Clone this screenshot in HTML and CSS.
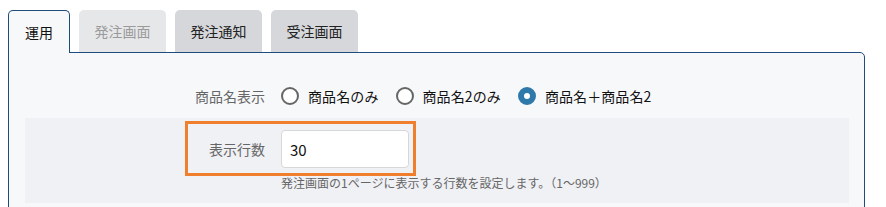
FILE: index.html
```html
<!DOCTYPE html>
<html lang="ja">
<head>
  <meta charset="UTF-8" />
  <title>設定</title>
  <link rel="stylesheet" href="styles.css">
</head>
<body>
  <div class="tabs">
    <div class="tab active">運用</div>
    <div class="tab disabled">発注画面</div>
    <div class="tab">発注通知</div>
    <div class="tab">受注画面</div>
  </div>

  <div class="panel">
    <div class="form-row">
      <div class="form-label">商品名表示</div>
      <div class="form-field radios">
        <label class="radio"><input type="radio" name="disp"> 商品名のみ</label>
        <label class="radio"><input type="radio" name="disp"> 商品名2のみ</label>
        <label class="radio"><input type="radio" name="disp" checked> 商品名＋商品名2</label>
      </div>
    </div>

    <div class="form-block shaded">
      <div class="form-row highlight">
        <div class="form-label">表示行数</div>
        <div class="form-field">
          <input class="text-input" type="text" value="30">
        </div>
      </div>
      <div class="help">発注画面の1ページに表示する行数を設定します。（1～999）</div>
    </div>
  </div>
</body>
</html>
```

FILE: styles.css
```css
body {
  margin: 0;
  padding: 10px 21px 0 8px;
  background-color: #fff;
  font-family: "Noto Sans CJK JP", "Noto Sans", sans-serif;
  font-size: 14px;
  color: #222;
}

.tabs {
  display: flex;
  gap: 9px;
  position: relative;
  z-index: 1;
}

.tab {
  width: 87px;
  height: 42px;
  display: flex;
  align-items: center;
  justify-content: center;
  background-color: #d6d7da;
  border-radius: 5px 5px 0 0;
  color: #222;
  box-sizing: border-box;
}

.tab.disabled {
  background-color: #e6e7e9;
  color: #9a9a9a;
}

.tab.active {
  width: 62px;
  height: 43px;
  margin-bottom: -1px;
  background-color: #f7f8fa;
  border: 1.5px solid #1f4c7c;
  border-bottom: none;
  color: #111;
}

.panel {
  background-color: #f7f8fa;
  border: 1.5px solid #1f4c7c;
  border-radius: 0 5px 0 0;
  padding: 24px 15px 0 16px;
  height: 160px;
  box-sizing: border-box;
}

.form-row {
  display: flex;
  align-items: center;
  gap: 16px;
}

.form-label {
  width: 240px;
  text-align: right;
  color: #666;
}

.radios {
  display: flex;
  align-items: center;
  gap: 17px;
  height: 38px;
}

.radio {
  display: flex;
  align-items: center;
  gap: 9px;
  color: #111;
  letter-spacing: 0.1px;
}

.radio input {
  appearance: none;
  -webkit-appearance: none;
  margin: 0;
  width: 18px;
  height: 18px;
  border: 2px solid #666;
  border-radius: 50%;
  background: #fff;
  box-sizing: border-box;
}

.radio input:checked {
  border: 6px solid #2f79aa;
}

.shaded {
  background-color: #f0f1f5;
  margin-top: 3px;
  padding: 12px 0 12px;
}

.highlight {
  position: relative;
}

.highlight::after {
  content: "";
  position: absolute;
  left: 160px;
  top: -9px;
  width: 231px;
  height: 55px;
  border: 3px solid #f07f2d;
  box-sizing: border-box;
  pointer-events: none;
}

.text-input {
  width: 128px;
  height: 38px;
  box-sizing: border-box;
  border: 1px solid #d7d7d7;
  border-radius: 4px;
  padding: 0 8px;
  font-family: inherit;
  font-size: 15px;
  color: #111;
  background: #fff;
}

.help {
  margin: 6px 0 0 256px;
  font-size: 12px;
  color: #666;
}
```
